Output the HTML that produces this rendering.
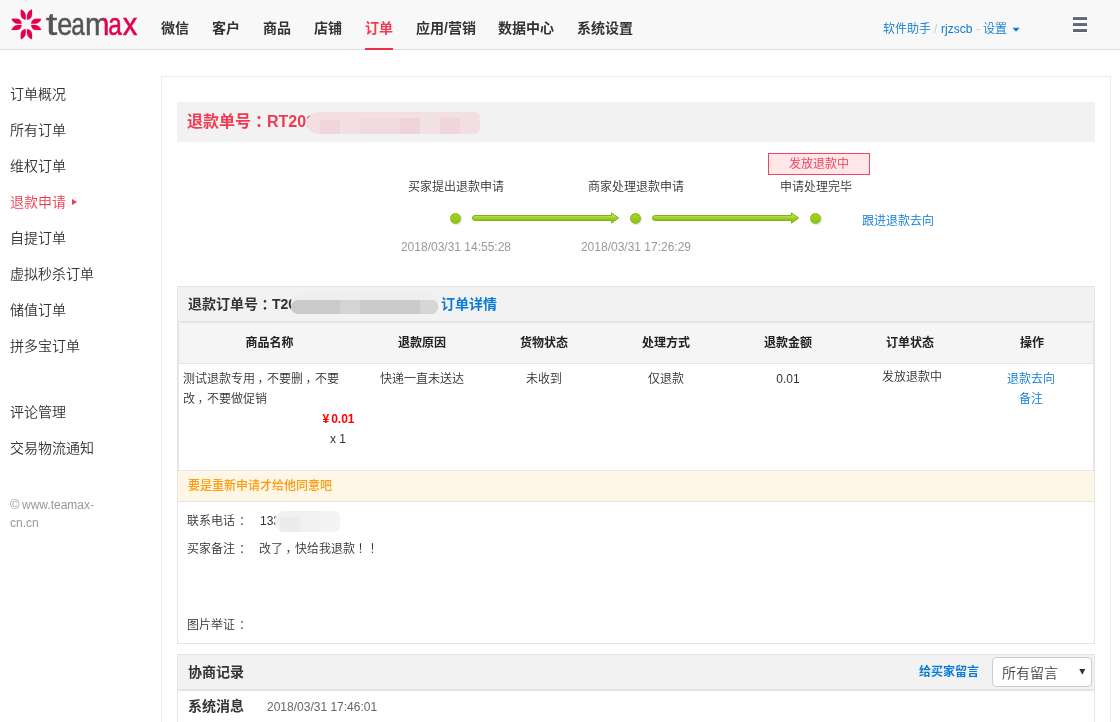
<!DOCTYPE html>
<html lang="zh-CN">
<head>
<meta charset="utf-8">
<title>退款申请</title>
<style>
*{box-sizing:border-box;margin:0;padding:0}
html,body{width:1120px;height:722px;overflow:hidden;background:#fff}
body{font-family:"Liberation Sans","Noto Sans CJK SC",sans-serif;font-size:12px;color:#333;font-weight:350;position:relative;line-height:20px}
a{color:#0a7bd8;text-decoration:none}
.abs{position:absolute;white-space:nowrap}
.b{font-weight:700}
.b b,b.l{font-weight:700}
.cn{position:relative;left:4px}
.c{text-align:center}
#hdr{position:absolute;left:0;top:0;width:1120px;height:50px;background:#f8f8f8;border-bottom:1px solid #ddd}
.nav{position:absolute;top:18px;font-size:14px;font-weight:700;color:#333;line-height:20px;white-space:nowrap}
.nav.on{color:#f03a52}
#uline{position:absolute;left:365px;top:48px;width:28px;height:2px;background:#ee2d4a}
.u{position:absolute;top:19px;font-size:12px;line-height:20px;color:#0a7bd8;white-space:nowrap}
.bar{position:absolute;left:1073px;width:14px;height:3px;background:linear-gradient(#6a7085,#5a6075);box-shadow:0 0 0 1px #fff}
.side{position:absolute;left:10px;font-size:14px;color:#333;line-height:20px;white-space:nowrap}
#main{position:absolute;left:161px;top:76px;width:950px;height:700px;border:1px solid #ececec;background:#fff}
#tbar{position:absolute;left:177px;top:102px;width:918px;height:40px;background:#f2f2f2}
.dot{position:absolute;top:213px;width:11px;height:11px;border-radius:50%;border:1px solid #84b60a;background:linear-gradient(#a2d818,#8dc220);box-shadow:1px 1px 1px rgba(90,90,160,.18)}
.lbl{position:absolute;top:177px;width:120px;text-align:center;white-space:nowrap;font-size:12px;line-height:20px;color:#333}
.dt{position:absolute;top:237px;width:140px;text-align:center;white-space:nowrap;font-size:12px;line-height:20px;color:#999}
.box{position:absolute;left:177px;width:918px;border:1px solid #e5e5e5;background:#fff}
.bh{position:absolute;left:0;top:0;width:916px;background:#f2f2f2}
.th{position:absolute;top:333px;width:122px;text-align:center;font-weight:700;color:#222;white-space:nowrap}
.td{position:absolute;width:122px;text-align:center;white-space:nowrap}
</style>
</head>
<body>
<div id="page" style="position:absolute;left:0;top:0;width:1120px;height:722px;overflow:hidden;will-change:transform">
<div id="hdr">
  <svg class="abs" style="left:0;top:0" width="150" height="49" viewBox="0 0 150 49">
    <defs>
      <g id="pair" stroke="#e4004f" stroke-width="0.25" stroke-linejoin="round">
        <path d="M-5.5,-14.8 C-5.75,-12.5 -5.75,-10 -5.3,-8.1 C-4.9,-6.4 -3,-5 -0.85,-4.65 C-0.45,-6.5 -0.55,-8.5 -0.9,-10 C-1.35,-12 -3,-13.9 -5.5,-14.8 Z"/>
        <path d="M5.5,-14.8 C5.75,-12.5 5.75,-10 5.3,-8.1 C4.9,-6.4 3,-5 0.85,-4.65 C0.45,-6.5 0.55,-8.5 0.9,-10 C1.35,-12 3,-13.9 5.5,-14.8 Z"/>
      </g>
      <linearGradient id="mg" gradientUnits="userSpaceOnUse" x1="102.6" y1="0" x2="103.6" y2="0">
        <stop offset="0" stop-color="#555"/><stop offset="1" stop-color="#e4004f"/>
      </linearGradient>
    </defs>
    <g transform="translate(26.4,24.4)" fill="#e4004f">
      <use href="#pair"/><use href="#pair" transform="rotate(90)"/><use href="#pair" transform="rotate(180)"/><use href="#pair" transform="rotate(270)"/>
    </g>
    <g font-family="Liberation Sans, sans-serif" font-size="30.5">
      <text x="46" y="34.8" fill="#555" stroke="#555" stroke-width="0.5" textLength="11.2" lengthAdjust="spacingAndGlyphs">t</text>
      <text x="57.15" y="34.8" fill="#555" stroke="#555" stroke-width="0.5" textLength="15.05" lengthAdjust="spacingAndGlyphs">e</text>
      <text x="71.26" y="34.8" fill="#555" stroke="#555" stroke-width="0.5" textLength="13.57" lengthAdjust="spacingAndGlyphs">a</text>
      <text x="84.95" y="34.8" fill="url(#mg)" stroke="url(#mg)" stroke-width="0.5" textLength="24.49" lengthAdjust="spacingAndGlyphs">m</text>
      <text x="108.36" y="34.8" fill="#e4004f" stroke="#e4004f" stroke-width="0.5" textLength="13.57" lengthAdjust="spacingAndGlyphs">a</text>
      <text x="122.67" y="34.8" fill="#e4004f" stroke="#e4004f" stroke-width="0.5" textLength="14.64" lengthAdjust="spacingAndGlyphs">x</text>
    </g>
  </svg>
  <span class="nav" style="left:161px">微信</span>
  <span class="nav" style="left:212px">客户</span>
  <span class="nav" style="left:263px">商品</span>
  <span class="nav" style="left:314px">店铺</span>
  <span class="nav on" style="left:365px">订单</span>
  <span class="nav" style="left:416px">应用/营销</span>
  <span class="nav" style="left:498px">数据中心</span>
  <span class="nav" style="left:577px">系统设置</span>
  <div id="uline"></div>
  <span class="u" style="left:883px">软件助手</span>
  <span class="u" style="left:934px;color:#ccc">/</span>
  <span class="u" style="left:941px">rjzscb</span>
  <span class="u" style="left:976px;color:#ccc">-</span>
  <span class="u" style="left:983px">设置</span>
  <svg class="abs" style="left:1012px;top:27px" width="9" height="6" viewBox="0 0 9 6"><path d="M0.5,0.8 L7.6,0.8 L4.05,4.8 Z" fill="#0a7bd8"/></svg>
  <div class="bar" style="top:17px"></div>
  <div class="bar" style="top:23px"></div>
  <div class="bar" style="top:29px"></div>
</div>

<span class="side" style="top:84px">订单概况</span>
<span class="side" style="top:120px">所有订单</span>
<span class="side" style="top:156px">维权订单</span>
<span class="side" style="top:192px;color:#f03a52">退款申请</span>
<svg class="abs" style="left:71px;top:198px" width="7" height="8" viewBox="0 0 7 8"><path d="M1,1 L6,4 L1,7 Z" fill="#f03a52"/></svg>
<span class="side" style="top:228px">自提订单</span>
<span class="side" style="top:264px">虚拟秒杀订单</span>
<span class="side" style="top:300px">储值订单</span>
<span class="side" style="top:336px">拼多宝订单</span>
<span class="side" style="top:402px">评论管理</span>
<span class="side" style="top:438px">交易物流通知</span>
<span class="abs" style="left:10px;top:495px;font-size:12px;color:#999;line-height:20px"><span style="display:inline-block;width:12px;font-size:13px;line-height:12px">©</span>www.teamax-</span>
<span class="abs" style="left:10px;top:513px;font-size:12px;color:#999;line-height:20px">cn.cn</span>

<div id="main"></div>
<div id="tbar"></div>
<span class="abs b" style="left:187px;top:110px;font-size:16px;line-height:24px;color:#f03a52">退款单号<span class="cn">：</span><b>RT201</b></span>
<div id="mos1" class="abs" style="left:307px;top:112px;width:173px;height:22px;border-radius:11px 6px 6px 11px;background:#f2dfe2;overflow:hidden">
  <i class="abs" style="left:13px;top:8px;width:20px;height:14px;background:#f1d5da"></i>
  <i class="abs" style="left:53px;top:6px;width:40px;height:16px;background:#f1dade"></i>
  <i class="abs" style="left:93px;top:6px;width:20px;height:16px;background:#f0d3d8"></i>
  <i class="abs" style="left:113px;top:0;width:20px;height:22px;background:#f2e2e4"></i>
  <i class="abs" style="left:133px;top:6px;width:20px;height:16px;background:#f1d6db"></i>
</div>

<!-- steps -->
<span class="lbl" style="left:396px">买家提出退款申请</span>
<span class="lbl" style="left:576px">商家处理退款申请</span>
<span class="lbl" style="left:756px">申请处理完毕</span>
<div class="abs c" style="left:768px;top:153px;width:102px;height:22px;border:1px solid #f0465f;background:#ffe6e9;color:#f03a52;font-size:12px;line-height:20px">发放退款中</div>
<div class="dot" style="left:450px"></div>
<div class="dot" style="left:630px"></div>
<div class="dot" style="left:810px"></div>
<svg class="abs" style="left:470px;top:210px" width="152" height="18" viewBox="0 0 152 18">
  <defs><linearGradient id="ag" x1="0" y1="0" x2="0" y2="1"><stop offset="0.3" stop-color="#b6e052"/><stop offset="0.55" stop-color="#9acc2a"/><stop offset="0.7" stop-color="#8fc31f"/></linearGradient></defs>
  <path d="M5,5.5 L141.5,5.5 L141.5,2.9 L148.7,8 L141.5,13.1 L141.5,10.5 L5,10.5 A2.5,2.5 0 0 1 5,5.5 Z" fill="url(#ag)" stroke="#80b40a" stroke-width="1" stroke-linejoin="round"/>
</svg>
<svg class="abs" style="left:650px;top:210px" width="152" height="18" viewBox="0 0 152 18">
  <path d="M5,5.5 L141.5,5.5 L141.5,2.9 L148.7,8 L141.5,13.1 L141.5,10.5 L5,10.5 A2.5,2.5 0 0 1 5,5.5 Z" fill="url(#ag)" stroke="#80b40a" stroke-width="1" stroke-linejoin="round"/>
</svg>
<span class="dt" style="left:386px">2018/03/31 14:55:28</span>
<span class="dt" style="left:566px">2018/03/31 17:26:29</span>
<a class="abs" style="left:862px;top:211px;font-size:12px">跟进退款去向</a>

<!-- order box -->
<div class="box" style="top:286px;height:358px">
  <div class="bh" style="height:34px"></div>
  <div class="abs" style="left:0;top:34px;width:916px;height:2px;background:#e5e5e5"></div>
  <div class="abs" style="left:0;top:36px;width:916px;height:40px;background:#f5f5f5;border-left:1px solid #e5e5e5;border-right:1px solid #e5e5e5"></div>
  <div class="abs" style="left:0;top:76px;width:916px;height:1px;background:#e5e5e5"></div>
  <div class="abs" style="left:0;top:77px;width:916px;height:106px;border-left:1px solid #e5e5e5;border-right:1px solid #e5e5e5"></div>
  <div class="abs" style="left:0;top:183px;width:916px;height:32px;background:#fef7e8;border-top:1px solid #e5e5e5;border-bottom:1px solid #e5e5e5"></div>
</div>
<span class="abs b" style="left:188px;top:294px;font-size:14px;color:#333">退款订单号<span class="cn" style="left:3.5px">：</span><b>T20</b></span>
<div class="abs" style="left:291px;top:293px;width:147px;height:21px;border-radius:9px 9px 8px 8px;background:#efefef"></div>
<div class="abs" style="left:291px;top:300px;width:147px;height:14px;border-radius:7px;background:#cacaca;overflow:hidden">
  <i class="abs" style="left:49px;top:0;width:20px;height:14px;background:#d4d4d4"></i>
  <i class="abs" style="left:129px;top:0;width:18px;height:14px;background:#d6d6d6"></i>
</div>
<a class="abs b" style="left:441px;top:294px;font-size:14px">订单详情</a>

<span class="th" style="left:178px;width:183px">商品名称</span>
<span class="th" style="left:361px">退款原因</span>
<span class="th" style="left:483px">货物状态</span>
<span class="th" style="left:605px">处理方式</span>
<span class="th" style="left:727px">退款金额</span>
<span class="th" style="left:849px">订单状态</span>
<span class="th" style="left:971px">操作</span>

<span class="abs" style="left:183px;top:369px">测试退款专用<span class="cn" style="left:2.5px">，</span>不要删<span class="cn" style="left:2.5px">，</span>不要</span>
<span class="abs" style="left:183px;top:389px">改<span class="cn" style="left:2.5px">，</span>不要做促销</span>
<span class="abs" style="left:322.5px;top:409px;color:#f00;font-weight:700">¥<span style="margin-left:2px">0.01</span></span>
<span class="abs" style="left:330px;top:429px">x 1</span>
<span class="td" style="left:361px;top:369px">快递一直未送达</span>
<span class="td" style="left:483px;top:369px">未收到</span>
<span class="td" style="left:605px;top:369px">仅退款</span>
<span class="td" style="left:727px;top:369px">0.01</span>
<span class="td" style="left:851px;top:367px">发放退款中</span>
<a class="td" style="left:970px;top:369px">退款去向</a>
<a class="td" style="left:970px;top:389px">备注</a>

<span class="abs" style="left:188px;top:476px;color:#ff9a0a;font-weight:500">要是重新申请才给他同意吧</span>
<span class="abs" style="left:187px;top:511px">联系电话<span class="cn" style="left:4px">：</span></span>
<span class="abs" style="left:260px;top:511px">133</span>
<div class="abs" style="left:275px;top:511px;width:65px;height:21px;border-radius:9px 6px 6px 9px;background:#f1f1f1;overflow:hidden">
  <i class="abs" style="left:5px;top:6px;width:20px;height:15px;background:#ececec"></i>
  <i class="abs" style="left:45px;top:0;width:20px;height:21px;background:#f4f4f4"></i>
</div>
<span class="abs" style="left:187px;top:539px">买家备注<span class="cn" style="left:4px">：</span></span>
<span class="abs" style="left:259px;top:539px">改了<span class="cn" style="left:2.5px">，</span>快给我退款<span class="cn" style="left:2.5px">！！</span></span>
<span class="abs" style="left:187px;top:615px">图片举证<span class="cn" style="left:4px">：</span></span>

<!-- negotiation box -->
<div class="box" style="top:654px;height:90px">
  <div class="bh" style="height:34px"></div>
  <div class="abs" style="left:0;top:34px;width:916px;height:2px;background:#e5e5e5"></div>
</div>
<span class="abs b" style="left:188px;top:662px;font-size:14px">协商记录</span>
<a class="abs" style="left:919px;top:662px;font-weight:700">给买家留言</a>
<div class="abs" style="left:992px;top:657px;width:100px;height:30px;border:1px solid #ccc;border-radius:4px;background:#fff"></div>
<span class="abs" style="left:1002px;top:663px;font-size:14px;color:#444">所有留言</span>
<svg class="abs" style="left:1078px;top:668px" width="9" height="8" viewBox="0 0 9 8"><path d="M1.3,1.1 L7.3,1.1 L4.3,6.8 Z" fill="#333"/></svg>
<span class="abs b" style="left:188px;top:696px;font-size:14px">系统消息</span>
<span class="abs" style="left:267px;top:697px;color:#666">2018/03/31 17:46:01</span>
</div>
</body>
</html>
